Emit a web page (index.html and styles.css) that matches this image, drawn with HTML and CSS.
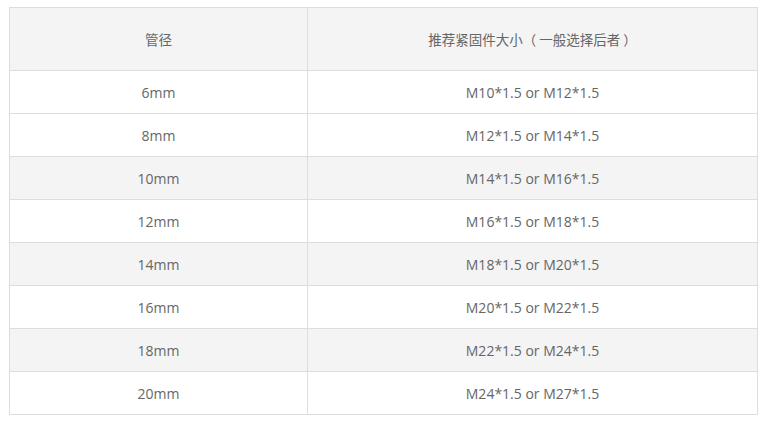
FILE: index.html
```html
<!DOCTYPE html>
<html lang="zh-CN">
<head>
<meta charset="utf-8">
<title>管径</title>
<link rel="stylesheet" href="styles.css">
</head>
<body>
<div class="wrap">
<table class="spec">
<thead>
<tr><th class="c1">管径</th><th class="c2">推荐紧固件大小（ 一般选择后者 ）</th></tr>
</thead>
<tbody>
<tr><td>6mm</td><td>M10*1.5 or M12*1.5</td></tr>
<tr><td>8mm</td><td>M12*1.5 or M14*1.5</td></tr>
<tr class="alt"><td>10mm</td><td>M14*1.5 or M16*1.5</td></tr>
<tr><td>12mm</td><td>M16*1.5 or M18*1.5</td></tr>
<tr class="alt"><td>14mm</td><td>M18*1.5 or M20*1.5</td></tr>
<tr><td>16mm</td><td>M20*1.5 or M22*1.5</td></tr>
<tr class="alt"><td>18mm</td><td>M22*1.5 or M24*1.5</td></tr>
<tr><td>20mm</td><td>M24*1.5 or M27*1.5</td></tr>
</tbody>
</table>
</div>
</body>
</html>
```
FILE: styles.css
```css
html, body {
  margin: 0;
  padding: 0;
  background: #fff;
}
.wrap {
  padding: 7px 0 0 9px;
}
.spec {
  border-collapse: collapse;
  width: 749px;
  table-layout: fixed;
  font-family: "Open Sans", "Noto Sans CJK SC", sans-serif;
  font-size: 14px;
  color: #666;
}
.spec th, .spec td {
  border: 1px solid #ddd;
  text-align: center;
  padding: 0;
  font-weight: normal;
}
.spec th {
  font-family: "Noto Sans CJK SC", sans-serif;
  font-size: 13.5px;
}
.spec thead tr {
  background: #f4f4f4;
  height: 63px;
}
.spec tbody tr {
  height: 43px;
}
.spec tr.alt {
  background: #f4f4f4;
}
.c1 { width: 297px; }
```
